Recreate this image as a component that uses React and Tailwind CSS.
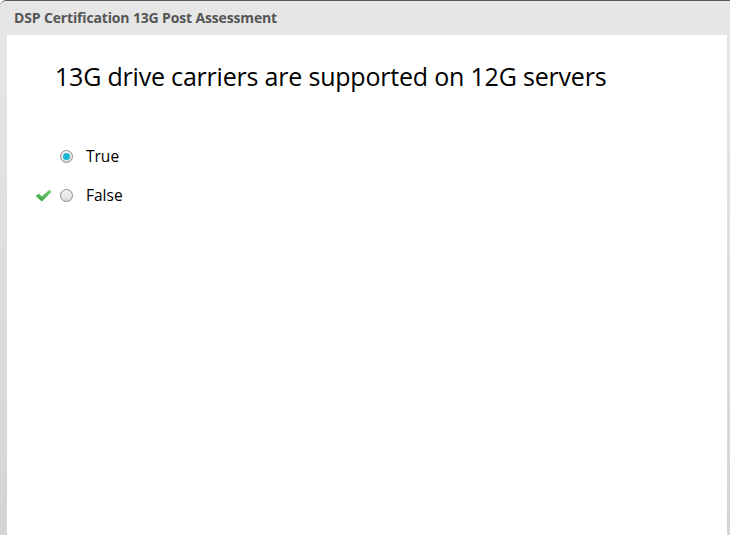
import React from "react";

export default function App() {
  return (
    <div className="w-[730px] h-[535px] overflow-hidden bg-[#e6e6e6] flex flex-col border-t border-[#5a5a5a] rounded-tl-[6px] font-['Open_Sans',sans-serif]">
      <div className="h-[34px] flex items-center pl-[14px] pb-[2px]">
        <span className="text-[14px] font-bold text-[#555] tracking-[-0.15px]">
          DSP Certification 13G Post Assessment
        </span>
      </div>
      <div className="flex-1 flex bg-gradient-to-b from-[#e6e6e6] to-[#d4d4d4] pl-[7px] pr-[3px]">
        <div className="flex-1 bg-white">
          <h1 className="mt-[26px] ml-[48px] text-[25px] text-black leading-[30px] tracking-[-0.2px]">
            13G drive carriers are supported on 12G servers
          </h1>
          <div className="mt-[55px] flex flex-col gap-[18px]">
            <Option label="True" selected />
            <Option label="False" correct />
          </div>
        </div>
      </div>
    </div>
  );
}

const Option = ({ label, selected, correct }) => (
  <div className="flex items-center h-[21px]">
    <div className="w-[52px] flex justify-end pr-[7px]">
      {correct && (
        <svg width="17" height="13" viewBox="0 0 17 13">
          <defs>
            <linearGradient id="chk" x1="0" y1="0" x2="0" y2="1">
              <stop offset="0" stopColor="#7bd07b" />
              <stop offset="1" stopColor="#3f9f3f" />
            </linearGradient>
          </defs>
          <path d="M0.5 7 L4 4.5 L6.8 7.5 L14.5 0.5 L16.5 3 L6.8 12.5 Z" fill="url(#chk)" />
        </svg>
      )}
    </div>
    <div className="ml-[1px] w-[13px] h-[13px] rounded-full border border-[#8a8a8a] bg-gradient-to-b from-[#f4f4f4] to-[#dcdcdc] flex items-center justify-center">
      {selected && <div className="w-[7px] h-[7px] rounded-full bg-[#1ab8d4]" />}
    </div>
    <span className="ml-[13px] text-[15.5px] text-black">{label}</span>
  </div>
);
